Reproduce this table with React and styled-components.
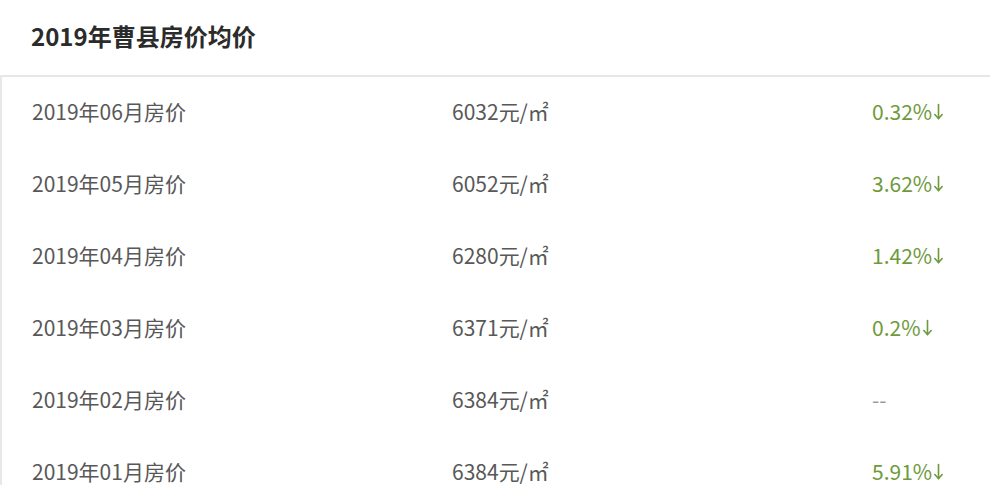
import styled, { createGlobalStyle } from 'styled-components';

const GlobalStyle = createGlobalStyle`
  html, body {
    margin: 0;
    padding: 0;
    background: #ffffff;
  }
  body {
    font-family: "Noto Sans CJK SC", "Noto Sans", sans-serif;
  }
`;

const Page = styled.div`
  width: 990px;
  height: 485px;
  overflow: hidden;
  background: #ffffff;
`;

const Header = styled.div`
  height: 75px;
  display: flex;
  align-items: center;
  padding-left: 31px;
  padding-bottom: 4px;
  box-sizing: border-box;
`;

const Title = styled.h2`
  margin: 0;
  font-size: 24px;
  font-weight: 700;
  color: #2b2b2b;
`;

const Table = styled.div`
  border-top: 2px solid #e6e6e6;
  border-left: 2px solid #e8e8e8;
  display: flex;
  flex-direction: column;
`;

const Row = styled.div`
  height: 72px;
  box-sizing: border-box;
  padding-bottom: 4px;
  display: grid;
  grid-template-columns: 420px 420px 1fr;
  align-items: center;
  padding-left: 30px;
  font-size: 21px;
  color: #585858;
`;

const Cell = styled.span`
  white-space: nowrap;
`;

const Change = styled.span`
  white-space: nowrap;
  display: flex;
  align-items: center;
  color: ${(p) => (p.$flat ? '#9a9a9a' : '#6e9a3c')};
`;

const ArrowIcon = styled.svg`
  width: 11px;
  height: 17px;
  margin-left: 1px;
  margin-top: 1px;
`;

const DownArrow = () => (
  <ArrowIcon viewBox="0 0 11 17" fill="none" stroke="currentColor" strokeWidth="1.6" strokeLinecap="round">
    <path d="M5.5 1.5V15.5" />
    <path d="M1.8 11.5L5.5 15.5L9.2 11.5" />
  </ArrowIcon>
);

const rows = [
  { month: '2019年06月房价', price: '6032', change: '0.32%', down: true },
  { month: '2019年05月房价', price: '6052', change: '3.62%', down: true },
  { month: '2019年04月房价', price: '6280', change: '1.42%', down: true },
  { month: '2019年03月房价', price: '6371', change: '0.2%', down: true },
  { month: '2019年02月房价', price: '6384', change: '--', down: false },
  { month: '2019年01月房价', price: '6384', change: '5.91%', down: true },
];

const App = () => {
  return (
    <Page>
      <GlobalStyle />
      <Header>
        <Title>2019年曹县房价均价</Title>
      </Header>
      <Table>
        {rows.map((r) => (
          <Row key={r.month}>
            <Cell>{r.month}</Cell>
            <Cell>{r.price}元/㎡</Cell>
            <Change $flat={!r.down}>
              {r.change}
              {r.down && <DownArrow />}
            </Change>
          </Row>
        ))}
      </Table>
    </Page>
  );
};

export default App;
